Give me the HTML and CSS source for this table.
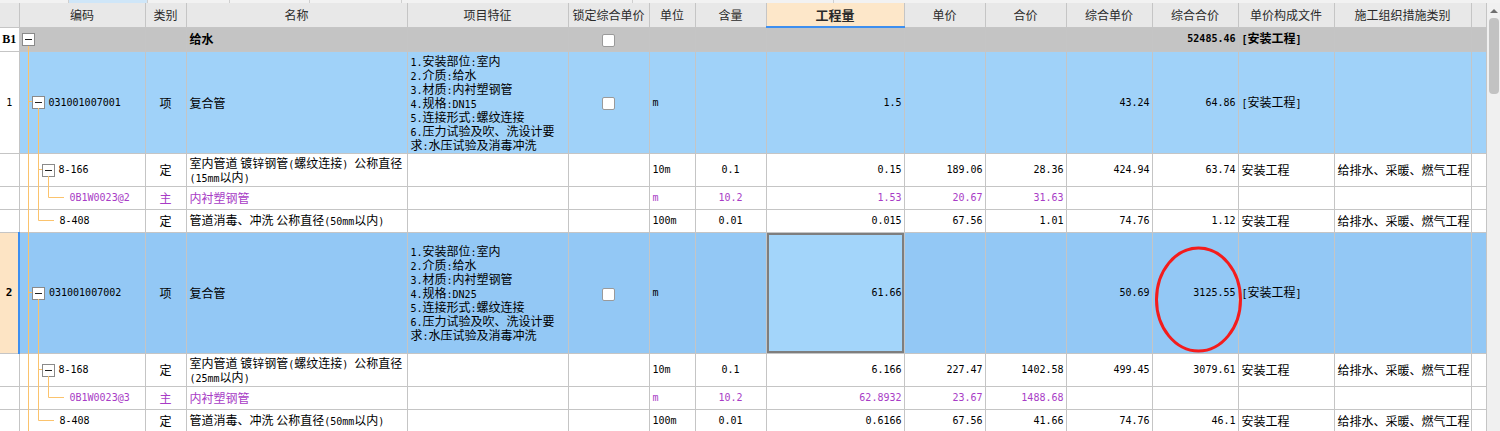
FILE: index.html
```html
<!DOCTYPE html>
<html lang="zh-CN">
<head>
<meta charset="utf-8">
<title>清单</title>
<link rel="stylesheet" href="styles.css">
</head>
<body>
<div class="frame">
  <div class="topstrip">
    <span class="s1"></span><span class="s2 act"></span><span class="s3"></span><span class="s4"></span><span class="s5"></span><span class="s6"></span><span class="s7"></span>
  </div>
  <div class="main">
    <table class="grid">
      <colgroup>
        <col style="width:19px"><col style="width:126px"><col style="width:41px"><col style="width:221px"><col style="width:161px"><col style="width:81px"><col style="width:46px"><col style="width:71px"><col style="width:138px"><col style="width:81px"><col style="width:81px"><col style="width:86px"><col style="width:86px"><col style="width:96px"><col style="width:137px"><col style="width:15px">
      </colgroup>
      <thead>
        <tr class="hd">
          <th></th><th>编码</th><th>类别</th><th>名称</th><th>项目特征</th><th>锁定综合单价</th><th>单位</th><th>含量</th><th class="qty-h">工程量</th><th>单价</th><th>合价</th><th>综合单价</th><th>综合合价</th><th>单价构成文件</th><th>施工组织措施类别</th><th></th>
        </tr>
      </thead>
      <tbody>
        <tr class="b1 h24">
          <td class="rn bold">B1</td>
          <td class="code"><div class="cd"><i class="tb l0"></i></div></td>
          <td></td>
          <td class="bold">给水</td>
          <td></td>
          <td class="ck"><i class="box"></i></td>
          <td></td><td></td><td></td><td></td><td></td><td></td>
          <td class="num bold">52485.46</td>
          <td class="bold"><span class="a">[</span>安装工程<span class="a">]</span></td>
          <td></td><td></td>
        </tr>
        <tr class="qd1 h102">
          <td class="rn">1</td>
          <td class="code"><div class="cd"><i class="tb l1"></i><span class="a">031001007001</span></div></td>
          <td class="c">项</td>
          <td>复合管</td>
          <td class="feat">
            <div><span class="a">1.</span>安装部位<span class="a">:</span>室内</div>
            <div><span class="a">2.</span>介质<span class="a">:</span>给水</div>
            <div><span class="a">3.</span>材质<span class="a">:</span>内衬塑钢管</div>
            <div><span class="a">4.</span>规格<span class="a">:DN15</span></div>
            <div><span class="a">5.</span>连接形式<span class="a">:</span>螺纹连接</div>
            <div><span class="a">6.</span>压力试验及吹、洗设计要</div>
            <div>求<span class="a">:</span>水压试验及消毒冲洗</div>
          </td>
          <td class="ck"><i class="box"></i></td>
          <td class="mono">m</td>
          <td></td>
          <td class="num">1.5</td>
          <td></td><td></td>
          <td class="num">43.24</td>
          <td class="num">64.86</td>
          <td><span class="a">[</span>安装工程<span class="a">]</span></td>
          <td></td><td></td>
        </tr>
        <tr class="h33">
          <td class="rn"></td>
          <td class="code"><div class="cd"><i class="tb l2"></i><span class="a">8-166</span></div></td>
          <td class="c">定</td>
          <td class="two"><div>室内管道 镀锌钢管<span class="a">(</span>螺纹连接<span class="a">) </span>公称直径</div><div><span class="a">(15mm</span>以内<span class="a">)</span></div></td>
          <td></td><td></td>
          <td class="mono">10m</td>
          <td class="mono c">0.1</td>
          <td class="num">0.15</td>
          <td class="num">189.06</td>
          <td class="num">28.36</td>
          <td class="num">424.94</td>
          <td class="num">63.74</td>
          <td>安装工程</td>
          <td>给排水、采暖、燃气工程</td>
          <td></td>
        </tr>
        <tr class="h23 zc">
          <td class="rn"></td>
          <td class="code"><div class="cd"><span class="a t3">0B1W0023@2</span></div></td>
          <td class="c">主</td>
          <td>内衬塑钢管</td>
          <td></td><td></td>
          <td class="mono">m</td>
          <td class="mono c">10.2</td>
          <td class="num">1.53</td>
          <td class="num">20.67</td>
          <td class="num">31.63</td>
          <td></td><td></td><td></td><td></td><td></td>
        </tr>
        <tr class="h23">
          <td class="rn"></td>
          <td class="code"><div class="cd"><span class="a t2">8-408</span></div></td>
          <td class="c">定</td>
          <td>管道消毒、冲洗 公称直径<span class="a">(50mm</span>以内<span class="a">)</span></td>
          <td></td><td></td>
          <td class="mono">100m</td>
          <td class="mono c">0.01</td>
          <td class="num">0.015</td>
          <td class="num">67.56</td>
          <td class="num">1.01</td>
          <td class="num">74.76</td>
          <td class="num">1.12</td>
          <td>安装工程</td>
          <td>给排水、采暖、燃气工程</td>
          <td></td>
        </tr>
        <tr class="qd2 h121">
          <td class="rn sel bold">2</td>
          <td class="code"><div class="cd"><i class="tb l1"></i><span class="a">031001007002</span></div></td>
          <td class="c">项</td>
          <td>复合管</td>
          <td class="feat">
            <div><span class="a">1.</span>安装部位<span class="a">:</span>室内</div>
            <div><span class="a">2.</span>介质<span class="a">:</span>给水</div>
            <div><span class="a">3.</span>材质<span class="a">:</span>内衬塑钢管</div>
            <div><span class="a">4.</span>规格<span class="a">:DN25</span></div>
            <div><span class="a">5.</span>连接形式<span class="a">:</span>螺纹连接</div>
            <div><span class="a">6.</span>压力试验及吹、洗设计要</div>
            <div>求<span class="a">:</span>水压试验及消毒冲洗</div>
          </td>
          <td class="ck"><i class="box"></i></td>
          <td class="mono">m</td>
          <td></td>
          <td class="num cur">61.66</td>
          <td></td><td></td>
          <td class="num">50.69</td>
          <td class="num">3125.55</td>
          <td><span class="a">[</span>安装工程<span class="a">]</span></td>
          <td></td><td></td>
        </tr>
        <tr class="h33">
          <td class="rn"></td>
          <td class="code"><div class="cd"><i class="tb l2"></i><span class="a">8-168</span></div></td>
          <td class="c">定</td>
          <td class="two"><div>室内管道 镀锌钢管<span class="a">(</span>螺纹连接<span class="a">) </span>公称直径</div><div><span class="a">(25mm</span>以内<span class="a">)</span></div></td>
          <td></td><td></td>
          <td class="mono">10m</td>
          <td class="mono c">0.1</td>
          <td class="num">6.166</td>
          <td class="num">227.47</td>
          <td class="num">1402.58</td>
          <td class="num">499.45</td>
          <td class="num">3079.61</td>
          <td>安装工程</td>
          <td>给排水、采暖、燃气工程</td>
          <td></td>
        </tr>
        <tr class="h23 zc">
          <td class="rn"></td>
          <td class="code"><div class="cd"><span class="a t3">0B1W0023@3</span></div></td>
          <td class="c">主</td>
          <td>内衬塑钢管</td>
          <td></td><td></td>
          <td class="mono">m</td>
          <td class="mono c">10.2</td>
          <td class="num">62.8932</td>
          <td class="num">23.67</td>
          <td class="num">1488.68</td>
          <td></td><td></td><td></td><td></td><td></td>
        </tr>
        <tr class="h23">
          <td class="rn"></td>
          <td class="code"><div class="cd"><span class="a t2">8-408</span></div></td>
          <td class="c">定</td>
          <td>管道消毒、冲洗 公称直径<span class="a">(50mm</span>以内<span class="a">)</span></td>
          <td></td><td></td>
          <td class="mono">100m</td>
          <td class="mono c">0.01</td>
          <td class="num">0.6166</td>
          <td class="num">67.56</td>
          <td class="num">41.66</td>
          <td class="num">74.76</td>
          <td class="num">46.1</td>
          <td>安装工程</td>
          <td>给排水、采暖、燃气工程</td>
          <td></td>
        </tr>
      </tbody>
    </table>
    <div class="sb">
      <div class="up"></div>
      <div class="thumb"></div>
    </div>
  </div>
  <svg class="ov" width="1500" height="431" viewBox="0 0 1500 431">
    <g stroke="#fbc36d" stroke-width="1" fill="none">
      <path d="M28.5 46 V431"/>
      <path d="M28 101.5 H32"/>
      <path d="M38.5 108 V220.5 H54"/>
      <path d="M38 169.5 H42"/>
      <path d="M48.5 176 V197.5 H64"/>
      <path d="M28 292.5 H32"/>
      <path d="M38.5 299 V420.5 H54"/>
      <path d="M38 369.5 H42"/>
      <path d="M48.5 376 V397.5 H64"/>
    </g>
    <ellipse cx="1198.5" cy="299.5" rx="42" ry="51.5" fill="none" stroke="#f41c1c" stroke-width="3"/>
  </svg>
</div>
</body>
</html>
```

FILE: styles.css
```css
html, body {
  margin: 0;
  padding: 0;
  background: #ffffff;
  overflow: hidden;
}

body {
  font-family: "Noto Sans CJK SC", sans-serif;
  font-size: 12px;
  color: #000;
}

.frame {
  position: relative;
  width: 1500px;
  height: 431px;
  overflow: hidden;
}

.topstrip {
  height: 3px;
  display: flex;
  background: #f2f2f2;
}

.topstrip span {
  border-right: 1px solid #cfcfcf;
}

.topstrip .s1 { width: 68px; }
.topstrip .s2 { width: 78px; }
.topstrip .s3 { width: 81px; }
.topstrip .s4 { width: 79px; }
.topstrip .s5 { width: 91px; }
.topstrip .s6 { width: 230px; }
.topstrip .s7 { width: 200px; }
.topstrip .act { background: #cfe6f8; }

.main {
  display: flex;
  align-items: flex-start;
}

.grid {
  border-collapse: collapse;
  table-layout: fixed;
  width: 1486px;
  flex: none;
}

.grid th,
.grid td {
  border: 1px solid #c5c5c5;
  padding: 0 3px;
  overflow: hidden;
  white-space: nowrap;
  vertical-align: middle;
  line-height: 14px;
  text-align: left;
}

.grid tr:first-child th {
  border-top: none;
}

.grid th:first-child,
.grid td:first-child {
  border-left: none;
}

.hd th {
  height: 23px;
  background: #e8e8e8;
  font-weight: normal;
  color: #2a2a2a;
  text-align: center;
  padding: 0;
}

.hd th.qty-h {
  background: #fde7c9;
  font-weight: bold;
  font-size: 13px;
  border-bottom: 2px solid #3d8ff0;
}

.h24 td { height: 23px; }
.h102 td { height: 101px; }
.h33 td { height: 32px; }
.h23 td { height: 22px; }
.h121 td { height: 120px; }

.b1 td { background: #c4c4c4; }
.qd1 td { background: #a0d2f9; }
.qd2 td { background: #93c8f5; }

.grid td.rn {
  background: #ffffff;
  text-align: center;
  padding: 0;
  font-family: "DejaVu Sans Mono", monospace;
  font-size: 10px;
}

.grid td.rn.bold {
  font-family: "Liberation Serif", serif;
  font-size: 12px;
}

.grid td.rn.sel {
  background: #fde4c4;
  border-right: 2px solid #3d8ff0;
  font-family: "DejaVu Sans Mono", monospace;
  font-size: 11px;
}

.bold { font-weight: bold; }

.grid td.c { text-align: center; }

.a {
  font-family: "DejaVu Sans Mono", monospace;
  font-size: 10px;
}

.mono {
  font-family: "DejaVu Sans Mono", monospace;
  font-size: 10px;
}

.grid td.num {
  font-family: "DejaVu Sans Mono", monospace;
  font-size: 10px;
  text-align: right;
  padding-right: 2px;
}

.grid td.code {
  padding: 0;
}

.cd {
  display: flex;
  align-items: center;
  gap: 4px;
  height: 14px;
}

.tb {
  display: inline-block;
  position: relative;
  width: 11px;
  height: 11px;
  border: 1px solid #8a8a8a;
  background: #ffffff;
  flex: none;
}

.tb::after {
  content: "";
  position: absolute;
  left: 2px;
  top: 5px;
  width: 7px;
  height: 1px;
  background: #222;
}

.tb.l0 { margin-left: 2px; }
.tb.l1 { margin-left: 12px; }
.tb.l2 { margin-left: 22px; }
.t2 { margin-left: 40px; }
.t3 { margin-left: 50px; }

.feat div,
.two div {
  white-space: nowrap;
  height: 14px;
  line-height: 14px;
  overflow: visible;
}

.grid td.ck {
  text-align: center;
}

.box {
  display: inline-block;
  width: 11px;
  height: 11px;
  border: 1px solid #9a9a9a;
  border-radius: 2px;
  background: #ffffff;
  vertical-align: middle;
}

.zc td { color: #a83cc6; }
.zc td.rn { color: #000; }

.grid td.cur {
  background: #a3d5fa;
  box-shadow: inset 0 0 0 2px #7e7e7e;
}

.sb {
  width: 14px;
  height: 428px;
  background: #f0f0f0;
  flex: none;
}

.up {
  width: 0;
  height: 0;
  margin: 6px auto 0;
  border-left: 4px solid transparent;
  border-right: 4px solid transparent;
  border-bottom: 4px solid #6e6e6e;
}

.thumb {
  margin: 5px auto 0;
  width: 10px;
  height: 76px;
  border-radius: 4px;
  background: #c2c2c2;
}

.ov {
  position: absolute;
  left: 0;
  top: 0;
  pointer-events: none;
}
```
